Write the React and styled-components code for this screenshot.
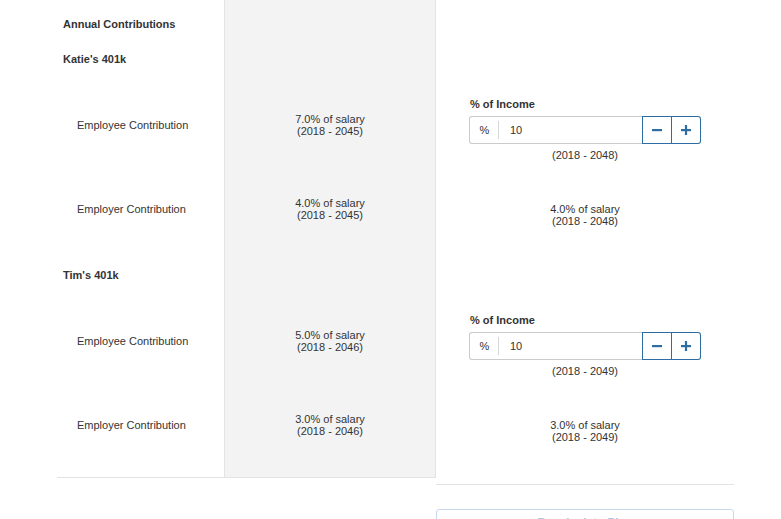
import React from "react";
import styled, { createGlobalStyle } from "styled-components";

const GlobalStyle = createGlobalStyle`
  html, body {
    margin: 0;
    padding: 0;
    overflow: hidden;
    background: #fff;
    font-family: "Liberation Sans", Arial, sans-serif;
    color: #333;
  }
`;

const Page = styled.div`
  display: flex;
  align-items: flex-start;
  padding-left: 57px;
  font-size: 11px;
`;

const LeftTable = styled.div`
  display: grid;
  grid-template-columns: 167px 212px;
  border-bottom: 1px solid #e3e3e3;
`;

const Label = styled.div`
  display: flex;
  align-items: ${p => (p.$top ? "flex-end" : "center")};
  height: ${p => p.$h}px;
  box-sizing: border-box;
  padding-left: ${p => (p.$bold ? 6 : 20)}px;
  padding-bottom: ${p => (p.$top ? 5 : 0)}px;
  font-weight: ${p => (p.$bold ? "bold" : "normal")};
`;

const GrayCell = styled.div`
  display: flex;
  flex-direction: column;
  justify-content: center;
  align-items: center;
  height: ${p => p.$h}px;
  background: #f3f3f3;
  border-left: 1px solid #e3e3e3;
  border-right: 1px solid #e3e3e3;
  box-sizing: border-box;
  line-height: 12px;
  text-align: center;
`;

const RightPanel = styled.div`
  width: 298px;
  display: flex;
  flex-direction: column;
`;

const RightRows = styled.div`
  display: flex;
  flex-direction: column;
  padding-top: 6px;
  padding-bottom: 11px;
  border-bottom: 1px solid #e3e3e3;
`;

const RightCell = styled.div`
  height: ${p => p.$h}px;
  display: flex;
  flex-direction: column;
  justify-content: center;
  align-items: center;
  line-height: 12px;
  text-align: center;
`;

const Field = styled.div`
  width: 232px;
  display: flex;
  flex-direction: column;
  padding-bottom: 3px;
`;

const FieldLabel = styled.div`
  font-weight: bold;
  text-align: left;
  line-height: 13px;
  margin-bottom: 5px;
  padding-left: 1px;
`;

const InputGroup = styled.div`
  display: flex;
  height: 28px;
`;

const Addon = styled.div`
  width: 29px;
  display: flex;
  align-items: center;
  justify-content: center;
  border: 1px solid #ccc;
  border-right: none;
  border-radius: 3px 0 0 3px;
  position: relative;
  &::after {
    content: "";
    position: absolute;
    right: 0;
    top: 4px;
    bottom: 4px;
    width: 1px;
    background: #d6d6d6;
  }
`;

const Input = styled.div`
  flex: 1;
  display: flex;
  align-items: center;
  padding-left: 11px;
  border: 1px solid #ccc;
  border-left: none;
  border-right: none;
  color: #333;
`;

const StepButton = styled.div`
  width: 28px;
  display: flex;
  align-items: center;
  justify-content: center;
  border: 1px solid #2e6da4;
  border-left-width: ${p => (p.$last ? 0 : 1)}px;
  border-radius: ${p => (p.$last ? "0 3px 3px 0" : "0")};
  background: #fff;
  color: #2e6da4;
`;

const Caption = styled.div`
  margin-top: 5px;
  line-height: 12px;
  text-align: center;
`;

const BottomButton = styled.div`
  margin-top: 24px;
  height: 34px;
  border: 1px solid #c6d8ec;
  border-radius: 3px;
  box-sizing: border-box;
  text-align: center;
  padding-top: 6px;
  color: #a9c6e8;
  font-size: 12px;
  font-weight: bold;
`;

const Minus = () => (
  <svg width="10" height="10" viewBox="0 0 10 10">
    <rect x="0" y="4" width="10" height="2.2" fill="currentColor" />
  </svg>
);

const Plus = () => (
  <svg width="10" height="10" viewBox="0 0 10 10">
    <rect x="0" y="4" width="10" height="2.2" fill="currentColor" />
    <rect x="3.9" y="0" width="2.2" height="10" fill="currentColor" />
  </svg>
);

const plans = [
  {
    name: "Katie's 401k",
    employee: { rate: "7.0%", span: "(2018 - 2045)", value: "10", newSpan: "(2018 - 2048)" },
    employer: { rate: "4.0%", span: "(2018 - 2045)", newSpan: "(2018 - 2048)" }
  },
  {
    name: "Tim's 401k",
    employee: { rate: "5.0%", span: "(2018 - 2046)", value: "10", newSpan: "(2018 - 2049)" },
    employer: { rate: "3.0%", span: "(2018 - 2046)", newSpan: "(2018 - 2049)" }
  }
];

const App = () => (
  <>
    <GlobalStyle />
    <Page>
      <LeftTable>
        <Label $h={35} $bold $top>Annual Contributions</Label>
        <GrayCell $h={35} />
        {plans.map(plan => (
          <React.Fragment key={plan.name}>
            <Label $h={48} $bold>{plan.name}</Label>
            <GrayCell $h={48} />
            <Label $h={84}>Employee Contribution</Label>
            <GrayCell $h={84}>
              <div>{plan.employee.rate} of salary</div>
              <div>{plan.employee.span}</div>
            </GrayCell>
            <Label $h={84}>Employer Contribution</Label>
            <GrayCell $h={84}>
              <div>{plan.employer.rate} of salary</div>
              <div>{plan.employer.span}</div>
            </GrayCell>
          </React.Fragment>
        ))}
        <Label $h={10} />
        <GrayCell $h={10} />
      </LeftTable>
      <RightPanel>
        <RightRows>
          <RightCell $h={35} />
          {plans.map(plan => (
            <React.Fragment key={plan.name}>
              <RightCell $h={48} />
              <RightCell $h={84}>
                <Field>
                  <FieldLabel>% of Income</FieldLabel>
                  <InputGroup>
                    <Addon>%</Addon>
                    <Input>{plan.employee.value}</Input>
                    <StepButton><Minus /></StepButton>
                    <StepButton $last><Plus /></StepButton>
                  </InputGroup>
                  <Caption>{plan.employee.newSpan}</Caption>
                </Field>
              </RightCell>
              <RightCell $h={84}>
                <div>{plan.employer.rate} of salary</div>
                <div>{plan.employer.newSpan}</div>
              </RightCell>
            </React.Fragment>
          ))}
        </RightRows>
        <BottomButton>Recalculate Plan</BottomButton>
      </RightPanel>
    </Page>
  </>
);

export default App;
